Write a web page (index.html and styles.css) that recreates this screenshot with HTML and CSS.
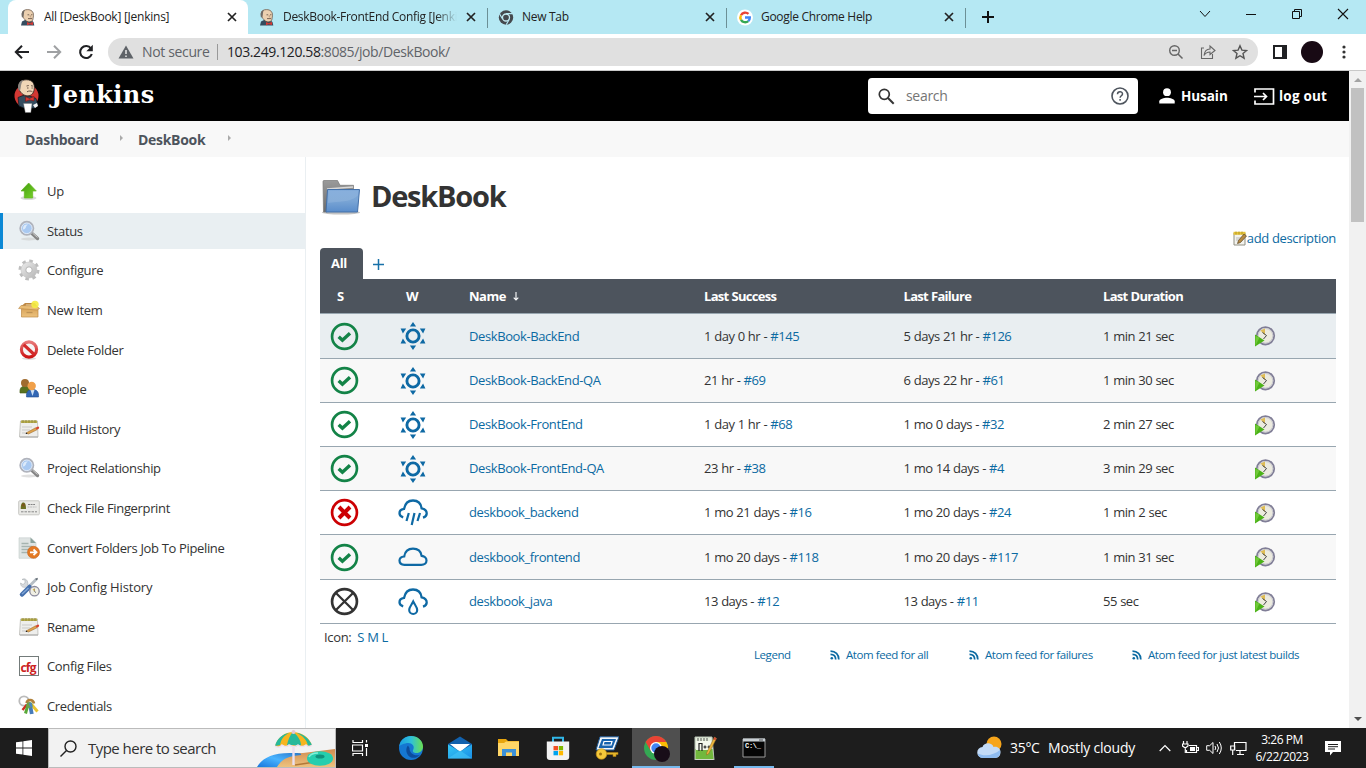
FILE: index.html
```html
<!DOCTYPE html>
<html lang="en">
<head>
<meta charset="utf-8">
<title>All [DeskBook] [Jenkins]</title>
<link rel="stylesheet" href="styles.css">
</head>
<body>
<svg class="defs" width="0" height="0" aria-hidden="true">
  <defs>
    <linearGradient id="gGreen" x1="0" y1="0" x2="1" y2="1"><stop offset="0" stop-color="#3f9a0c"/><stop offset="1" stop-color="#7bd62c"/></linearGradient>
    <linearGradient id="gFolder" x1="0" y1="0" x2="0" y2="1"><stop offset="0" stop-color="#7ba7d9"/><stop offset=".5" stop-color="#7aa5d5"/><stop offset="1" stop-color="#5a8dcb"/></linearGradient>
    <linearGradient id="gGrey" x1="0" y1="0" x2="0" y2="1"><stop offset="0" stop-color="#9a9a9a"/><stop offset="1" stop-color="#6b6b6b"/></linearGradient>
    <linearGradient id="gBox" x1="0" y1="0" x2="0" y2="1"><stop offset="0" stop-color="#d9a45a"/><stop offset="1" stop-color="#ecc27e"/></linearGradient>
    <linearGradient id="gGear" x1="0" y1="0" x2="1" y2="1"><stop offset="0" stop-color="#ececec"/><stop offset="1" stop-color="#b5b5b5"/></linearGradient>
    <linearGradient id="gEdge" x1="0" y1="0" x2="1" y2="0"><stop offset="0" stop-color="#1b9de2"/><stop offset=".5" stop-color="#2fc1d8"/><stop offset="1" stop-color="#6be04f"/></linearGradient>
    <linearGradient id="gMail" x1="0" y1="0" x2="1" y2="1"><stop offset="0" stop-color="#35c8f5"/><stop offset="1" stop-color="#1a8ee6"/></linearGradient>
    <linearGradient id="gRed" x1="0" y1="0" x2="0" y2="1"><stop offset="0" stop-color="#e87878"/><stop offset="1" stop-color="#cc1515"/></linearGradient>
    <linearGradient id="gSand" x1="0" y1="0" x2="0" y2="1"><stop offset="0" stop-color="#d08b4f"/><stop offset="1" stop-color="#edc27e"/></linearGradient>
    <linearGradient id="gSea" x1="0" y1="1" x2="1" y2="0"><stop offset="0" stop-color="#1976dc"/><stop offset=".5" stop-color="#49b4ff"/><stop offset="1" stop-color="#2876c8"/></linearGradient>
  </defs>
  <symbol id="butler" viewBox="0 0 16 17">
    <path d="M1 16.500l1-4 3-1.500h6l2.500 2 .8 3.500z" fill="#344c5f"/>
    <path d="M2.200 5C2 1.800 4.600.6 7.500.6c3.800 0 6.200 2.100 6 6l-.7 4.400c-1 2-4.300 2.500-6.300 1.100L3.300 9z" fill="#ecd0b0" stroke="#5c4c40" stroke-width=".7"/>
    <path d="M2 8.500C.9 4.500 2.200 1.600 5 1 3.600 2.700 4.200 5 3.500 7.500z" fill="#716b66"/>
    <path d="M7.500 5.800h1.700M11 5.800h1.500M8 9.600h4" stroke="#6b594c" stroke-width=".9"/>
    <path d="M10.200 6v2h1.200" fill="none" stroke="#b08f73" stroke-width=".7"/>
    <path d="M7 13l2.700 1.200L13 12.800v3.200l-3.300-.8L7 16.300z" fill="#d33833"/>
  </symbol>
  <symbol id="butler-lg" viewBox="0 0 26 34">
    <ellipse cx="12.500" cy="17" rx="12" ry="11.500" fill="#d33833"/>
    <path d="M4 18.500l5-2 8 1 5 2 2 7-3 2.500-10 .5-6-2.500z" fill="#344c5f" stroke="#11191f" stroke-width=".7"/>
    <path d="M4.500 8C4.300 3.200 8 .8 12.500.8c6 0 8.500 4 7.700 9.500-.5 4-2.700 6.500-6.500 6.500-4.200 0-8.500-3.500-9.200-8.800z" fill="#f0d6b7" stroke="#2c2622" stroke-width=".8"/>
    <path d="M4.700 11.500C2.800 6 5.400 1.500 9.500 1 6.500 4 7.400 8 6 11.500z" fill="#8a8580"/>
    <path d="M12.500 7l2.300-.5M17 6.700l2 .4M13 9h1.500M17.500 9h1.300M13 12.800c2-1.200 4-.9 5.500 0" fill="none" stroke="#5c4a3e" stroke-width=".9"/>
    <path d="M11.500 17.700l4 1.700 4.500-2v4.500l-4.500-1-4 1.500z" fill="#d33833" stroke="#611" stroke-width=".5"/>
    <path d="M9.500 24.500h8.500l-1.200 9h-5.500z" fill="#fff" stroke="#777" stroke-width=".4"/>
    <path d="M19 26l4-2 1 3-3 2z" fill="#f4f4f4"/>
  </symbol>
  <symbol id="close" viewBox="0 0 10 10"><path d="M1 1l8 8M9 1L1 9" fill="none" stroke="currentColor" stroke-width="1.700"/></symbol>
  <symbol id="i-up" viewBox="0 0 22 22"><ellipse cx="10.500" cy="18" rx="8" ry="2" fill="#bbb" opacity=".55"/><path d="M10.700 3l7.600 8h-3.600v7H6.300v-7H3z" fill="url(#gGreen)" stroke="#63b51f" stroke-width=".7"/></symbol>
  <symbol id="i-search" viewBox="0 0 22 22"><ellipse cx="11" cy="19" rx="8" ry="1.500" fill="#ccc" opacity=".6"/><path d="M14 13.500l5.500 5" stroke="#858585" stroke-width="3.400" stroke-linecap="round"/><path d="M14.500 13l5 4.500" stroke="#ccc" stroke-width="1"/><circle cx="8.800" cy="8.300" r="6.500" fill="#b9d2f2" stroke="#b0b3bc" stroke-width="2"/><circle cx="8.800" cy="8.300" r="5.300" fill="#a9c9f1" stroke="#dfe9f6"/><path d="M5 8c0-3 3-4 5-3.500C7 6 9 9 5 9.500z" fill="#dceafa"/></symbol>
  <symbol id="i-gear" viewBox="0 0 22 22"><circle cx="11" cy="11" r="9" fill="none" stroke="#bdbdbd" stroke-width="3" stroke-dasharray="3.500 3.568"/><circle cx="11" cy="11" r="8" fill="url(#gGear)" stroke="#c4c4c4" stroke-width=".6"/><circle cx="11" cy="11" r="3.200" fill="#fff" stroke="#b5b5b5"/></symbol>
  <symbol id="i-box" viewBox="0 0 22 22"><path d="M4 6.500L7 4h10l2 3v3H4z" fill="#bd8744"/><path d="M8 5.500h7v3H7z" fill="#f0d7a8"/><path d="M3.500 9.500h16.500v8.500H3.500z" fill="url(#gBox)" stroke="#bf8a43" stroke-width=".7"/><path d="M3 6.500L.6 9.500 19 11l2.500-1.500L18.500 7z" fill="#e9bc75" stroke="#b98846" stroke-width=".6"/><path d="M8.500 13.500h6" stroke="#bd9255" stroke-width="1.300"/><circle cx="17" cy="5.500" r="3.700" fill="#f5ec42" opacity=".9"/></symbol>
  <symbol id="i-stop" viewBox="0 0 22 22"><ellipse cx="11" cy="19.500" rx="7" ry="1.500" fill="#bbb" opacity=".5"/><circle cx="11" cy="10.500" r="7.600" fill="#f5f5f5" stroke="url(#gRed)" stroke-width="3.100"/><path d="M5.700 5.700l10.500 9.800" stroke="#d32c2c" stroke-width="3.200"/></symbol>
  <symbol id="i-people" viewBox="0 0 22 22"><path d="M2 15c-.5-5 1.500-7 5-7s5 2 5 7z" fill="#58711f" stroke="#455a18" stroke-width=".6"/><circle cx="7" cy="5" r="4" fill="#a06c30"/><path d="M8.500 19c-.5-5 1.500-7.500 6-7.500s6.500 2.500 6 7.500z" fill="#3267b5" stroke="#234f92" stroke-width=".6"/><path d="M12.500 12h4l-2 6z" fill="#cce0f5"/><circle cx="13.700" cy="8" r="4.200" fill="#f0a04a"/></symbol>
  <symbol id="i-note" viewBox="0 0 22 22"><path d="M2.500 3h17l.5 16H1.500z" fill="#eeeeec" stroke="#b9b9b4" stroke-width=".8"/><path d="M3 2.500h16v2.500H3z" fill="#b8af4e"/><path d="M5 2v3M8 2v3M11 2v3M14 2v3M17 2v3" stroke="#8a8238" stroke-width=".8"/><path d="M4 9h10M4 12h8M4 15h5" stroke="#c9c9c9"/><path d="M8 15l9.500-5.200 1.500 2-8.500 4.200z" fill="#dfa24c" stroke="#94672b" stroke-width=".5"/><path d="M17.500 9.800l2.500-1.200c1 .2 1.500 1.200.9 2l-2 1.200z" fill="#d8422c"/><path d="M7.500 16l1-1.500 1 1.400z" fill="#222"/><path d="M2 19h18" stroke="#aaa"/></symbol>
  <symbol id="i-card" viewBox="0 0 22 22"><rect x=".7" y="3.800" width="20.600" height="14" rx="1" fill="#eaeae7" stroke="#c8c8c4"/><path d="M2.700 12c0-5 1-6.500 2.700-6.500S8 7.500 8 12z" fill="#6b7022"/><circle cx="5.400" cy="8" r="1.600" fill="#7c551f"/><path d="M10 7.500h7" stroke="#777" stroke-width=".9" stroke-dasharray="2 .6"/><path d="M9.500 10h9" stroke="#aaa" stroke-width=".7" stroke-dasharray="2 .6"/><path d="M3 14.800h16" stroke="#888" stroke-dasharray="2.500 1"/></symbol>
  <symbol id="i-convert" viewBox="0 0 22 22"><path d="M1 .8h12l5 5v15.500H1z" fill="#dfe4e3" stroke="#c5cdcb" stroke-width=".6"/><path d="M12.500.8l5.500 5.300h-5.500z" fill="#8ca39c"/><path d="M3.500 6.500h7M3.500 9.500h11M3.500 12.500h8M3.500 15.500h6" stroke="#a6b4b0" stroke-width="1.300"/><circle cx="15.500" cy="15.300" r="6" fill="#e47a24" stroke="#c65f15" stroke-width=".6"/><path d="M12 15.300h6M15.500 12.500l3 2.800-3 2.800" fill="none" stroke="#fff" stroke-width="1.800"/></symbol>
  <symbol id="i-tools" viewBox="0 0 22 22"><path d="M4 3.500l3 .5v3L5 8.500 2.500 7c.2 4 3.200 5 5.200 4l6 7 3-2.500-7-6.500C10.700 4.500 7 1.500 4 3.500z" fill="#d6d9dc" stroke="#aaaeb1" stroke-width=".6"/><path d="M18.500 3L11 10.500" stroke="#b7bec4" stroke-width="2.800"/><path d="M17.700 3.500l2-1" stroke="#5d6770" stroke-width="1.500"/><path d="M11.500 11L4 18.500" stroke="#4570ad" stroke-width="4.500" stroke-linecap="round"/><path d="M10.500 12L4 18" stroke="#82a7d8" stroke-width="1.300"/><circle cx="16.500" cy="15.200" r="4.700" fill="#f0efe4" stroke="#8b8a9e" stroke-width="1.300"/><path d="M16.300 12.500v2.800l1.700 1.300" fill="none" stroke="#666" stroke-width=".9"/><path d="M14.500 13l2 0v2.500z" fill="#dbb43e"/></symbol>
  <symbol id="i-cfg" viewBox="0 0 22 22"><rect x="1.500" y="1.500" width="19" height="19" fill="#fff" stroke="#737b7a"/><text x="2.500" y="16.500" class="cfg-text">cfg</text></symbol>
  <symbol id="i-keys" viewBox="0 0 22 22"><circle cx="6" cy="6" r="4.700" fill="none" stroke="#bbb" stroke-width="1.800"/><path d="M9 9.500L4.500 15" stroke="#cc2d20" stroke-width="2.500"/><path d="M10 9.500L7.500 18.500" stroke="#5aa838" stroke-width="3"/><path d="M13.500 9.500l6 7" stroke="#e9c430" stroke-width="3"/><path d="M12 9.500l1.800 9.500" stroke="#467bb9" stroke-width="3.800"/><path d="M8.500 8c1-4 6.500-4 7.500.5" fill="none" stroke="#b0813a" stroke-width="2.600"/><circle cx="11.500" cy="10" r="3" fill="#6ba04c"/><path d="M12 8l1.500 4" stroke="#4e87c2" stroke-width="2.500"/></symbol>
  <symbol id="s-ok" viewBox="0 0 28 28"><circle cx="14" cy="14" r="12" fill="none" stroke="#138347" stroke-width="2.600"/><path d="M8.400 14.200l3.600 3.400 7.300-6.800" fill="none" stroke="#138347" stroke-width="3.300"/></symbol>
  <symbol id="s-bad" viewBox="0 0 28 28"><circle cx="14" cy="14" r="12" fill="none" stroke="#cc0003" stroke-width="2.600"/><path d="M8.700 8.700l10.600 10.600M19.300 8.700L8.700 19.300" stroke="#cc0003" stroke-width="3.800"/></symbol>
  <symbol id="s-off" viewBox="0 0 28 28"><circle cx="14" cy="14" r="12" fill="none" stroke="#333" stroke-width="2.600"/><path d="M5.500 5.500l17 17M22.500 5.500l-17 17" stroke="#333" stroke-width="2.200"/></symbol>
  <symbol id="w-sun" viewBox="0 0 30 30"><circle cx="15" cy="15" r="6.100" fill="none" stroke="#0e69a4" stroke-width="2.900"/><path d="M15 1l3.100 4.500h-6.200zM15 29l3.100-4.500h-6.200zM2.600 7.400h5.600l-3.300 5.100zM27.400 7.400h-5.600l3.300 5.100zM2.600 22.600h5.600l-3.300-5.100zM27.400 22.600h-5.600l3.300-5.100z" fill="#0e69a4"/></symbol>
  <symbol id="w-cloud" viewBox="0 0 30 30"><path d="M6.500 22.800c-3 0-5-1.500-5-4.200 0-2.500 2-3.800 4.700-4.100C7 9.500 10.200 6.700 15 6.700s7.900 2.700 8.600 7.100c2.700.3 4.900 2.300 4.900 4.600 0 2.700-2.200 4.400-5.200 4.400z" fill="none" stroke="#0e69a4" stroke-width="2.200"/></symbol>
  <symbol id="w-top" viewBox="0 0 30 30"><path d="M5.200 19.300C3 18.600 1.500 17.200 1.500 15.200c0-2.500 1.800-3.900 4.500-4.300C7 6 10.200 2.500 15 2.500s7.900 2.800 8.600 7.800c3 .6 5.100 2.600 5.100 5.200 0 2.200-1.500 3.500-3.700 4.200" fill="none" stroke="#0e69a4" stroke-width="2.300"/></symbol>
  <symbol id="w-rain" viewBox="0 0 30 30"><use href="#w-top"/><path d="M10.800 15l-2.300 8M16.500 15l-2.800 12M22 15l-2.500 8" stroke="#0e69a4" stroke-width="2.200"/></symbol>
  <symbol id="w-drop" viewBox="0 0 30 30"><use href="#w-top"/><path d="M15.200 14.500c-1.700 3.500-4 5.500-4 8.500a4 4 0 0 0 8 0c0-3-2.300-5-4-8.500z" fill="none" stroke="#0e69a4" stroke-width="2.100"/></symbol>
  <symbol id="build" viewBox="0 0 22 22"><circle cx="11.500" cy="10.800" r="8.700" fill="#ecebdf" stroke="#807e97" stroke-width="1.800"/><circle cx="11.500" cy="10.800" r="7.300" fill="none" stroke="#c8c8d0"/><path d="M11 10L6.500 5.500 11 3.500z" fill="#dfbd55"/><path d="M8.500 7.500l4 3-3 3.500" fill="none" stroke="#444" stroke-width="1"/><path d="M1 9.500l9.500 6L1 21.500z" fill="#4bb218"/><path d="M1.500 11l4 1.500-4 8z" fill="#71c939"/></symbol>
  <symbol id="rss" viewBox="0 0 10 10"><circle cx="1.800" cy="8.200" r="1.300" fill="#0b6aa2"/><path d="M.5 4.300c3.200 0 5.200 2 5.200 5.200M.5 1.200C5.500 1.200 8.800 4.500 8.800 9.500" fill="none" stroke="#0b6aa2" stroke-width="1.700"/></symbol>
</svg>

<header class="tabs">
  <div class="tab tab-active"><svg class="fav"><use href="#butler"/></svg><span class="tab-title">All [DeskBook] [Jenkins]</span><svg class="tab-x"><use href="#close"/></svg></div>
  <div class="tab"><svg class="fav"><use href="#butler"/></svg><span class="tab-title tab-fade">DeskBook-FrontEnd Config [Jenkins]</span><svg class="tab-x"><use href="#close"/></svg></div>
  <div class="tab tab-line"><svg class="fav" viewBox="0 0 16 16"><circle cx="8" cy="8" r="7.200" fill="#45494e"/><circle cx="8" cy="8" r="3.500" fill="#45494e" stroke="#c7ebf2" stroke-width="1.300"/><path d="M8 4.200h6.500M4.700 9.800L1.600 4.500M11.300 9.800L8.200 15.200" stroke="#b5e8f3" stroke-width="1.200"/></svg><span class="tab-title">New Tab</span><svg class="tab-x"><use href="#close"/></svg></div>
  <div class="tab tab-line"><svg class="fav" viewBox="0 0 16 16"><circle cx="8" cy="8" r="8" fill="#fff"/><g fill="none" stroke-width="2.400"><path d="M4 5.700a4.800 4.800 0 0 1 7.500-1.300" stroke="#ea4335"/><path d="M4 5.700a4.800 4.800 0 0 0 0 4.600" stroke="#fbbc05"/><path d="M4 10.300a4.800 4.800 0 0 0 7.300 1.300" stroke="#34a853"/><path d="M8 8h4.800a4.800 4.800 0 0 1-1.500 3.600" stroke="#4285f4"/></g></svg><span class="tab-title">Google Chrome Help</span><svg class="tab-x"><use href="#close"/></svg></div>
  <div class="newtab"><svg width="12" height="12" viewBox="0 0 12 12"><path d="M6 0v12M0 6h12" stroke="#111" stroke-width="2"/></svg></div>
  <div class="win">
    <svg viewBox="0 0 46 28"><path d="M18 11l5 5.500 5-5.500" fill="none" stroke="#111"/></svg>
    <svg viewBox="0 0 46 28"><path d="M18 14.500h10" stroke="#111"/></svg>
    <svg viewBox="0 0 46 28"><path d="M18.500 11.500h7v7h-7zM20.500 11.500v-2h7v7h-2" fill="none" stroke="#111"/></svg>
    <svg viewBox="0 0 46 28"><path d="M18 9l10 10M28 9L18 19" stroke="#111" stroke-width="1.100"/></svg>
  </div>
</header>

<div class="toolbar">
  <svg class="nav" viewBox="0 0 16 16"><path d="M15 8H2M8 1.800L1.800 8 8 14.200" fill="none" stroke="#202124" stroke-width="2"/></svg>
  <svg class="nav" viewBox="0 0 16 16"><path d="M1 8h13M8 1.800L14.200 8 8 14.200" fill="none" stroke="#9fa1a3" stroke-width="2"/></svg>
  <svg class="nav" viewBox="0 0 16 16"><path d="M13 4.500A6 6 0 1 0 13.800 10" fill="none" stroke="#202124" stroke-width="2.100"/><path d="M14.800.8v6.500H8.300z" fill="#202124"/></svg>
  <div class="omni">
    <svg width="16" height="14" viewBox="0 0 16 14"><path d="M8 .5L15.500 13.500H.5z" fill="#5f6368"/><path d="M8 5v4M8 10.500V12" stroke="#e0e0e0" stroke-width="1.600"/></svg>
    <span class="insecure">Not secure</span><i class="omni-sep"></i>
    <span class="url"><span class="host">103.249.120.58</span>:8085/job/DeskBook/</span>
    <span class="omni-icons">
      <svg viewBox="0 0 16 16"><circle cx="6.500" cy="6.500" r="4.800" fill="none" stroke="#666" stroke-width="1.400"/><path d="M4 6.500h5M10 10l4.500 4.500" stroke="#666" stroke-width="1.500"/></svg>
      <svg viewBox="0 0 16 16"><path d="M4 4H1.500v10.500h11V10M4 11.500C4.500 7 7 5 10 5V2l5 4.500-5 4V8C7.500 8 5.500 9 4 11.500z" fill="none" stroke="#666" stroke-width="1.100"/></svg>
      <svg viewBox="0 0 16 16"><path d="M8 1.800l1.900 4.300 4.700.4-3.600 3 1.100 4.700L8 11.700l-4.100 2.500L5 9.500l-3.600-3 4.700-.4z" fill="none" stroke="#555" stroke-width="1.400"/></svg>
    </span>
  </div>
  <svg class="side" viewBox="0 0 14 14"><path d="M1 1h12v12H1z" fill="none" stroke="#202124" stroke-width="2"/><path d="M9 1h4v12H9z" fill="#202124"/></svg>
  <span class="avatar"></span>
  <svg class="kebab" viewBox="0 0 4 14"><g fill="#333"><circle cx="2" cy="2" r="1.600"/><circle cx="2" cy="7" r="1.600"/><circle cx="2" cy="12" r="1.600"/></g></svg>
</div>

<div class="view">
  <div class="page">
    <div class="jhead">
      <svg class="jlogo"><use href="#butler-lg"/></svg><span class="jname">Jenkins</span>
      <div class="jsearch"><svg width="17" height="17" viewBox="0 0 17 17"><circle cx="6.300" cy="6.300" r="5" fill="none" stroke="#333" stroke-width="1.700"/><path d="M10 10l5.700 5.700" stroke="#333" stroke-width="2"/></svg><span>search</span><svg class="help" width="18" height="18" viewBox="0 0 18 18"><circle cx="9" cy="9" r="8" fill="none" stroke="#4d545d" stroke-width="1.600"/><path d="M6.500 7.200c0-3.300 5-3.300 5-.3 0 1.700-2.400 2-2.400 3.900M9.100 12v1.700" fill="none" stroke="#4d545d" stroke-width="1.500"/></svg></div>
      <svg class="user" width="16" height="16" viewBox="0 0 16 16"><circle cx="8" cy="4.200" r="3.900" fill="#fff"/><path d="M.3 15.500v-2.300C.3 11 5 9.700 8 9.700s7.700 1.300 7.700 3.500v2.300z" fill="#fff"/></svg><span class="jlink husain">Husain</span>
      <svg class="logout" width="21" height="17" viewBox="0 0 21 17"><path d="M1 4.500V1h18.500v15H1v-3.500M0 8.500h12M9 5l3.500 3.500L9 12" fill="none" stroke="#fff" stroke-width="1.700"/></svg><span class="jlink">log out</span>
    </div>
    <nav class="crumbs"><span class="c1">Dashboard</span><i class="arrow"></i><span class="c2">DeskBook</span><i class="arrow"></i></nav>
    <div class="cols">
      <aside class="sidebar">
        <a class="item"><svg><use href="#i-up"/></svg><span>Up</span></a>
        <a class="item item-on"><svg><use href="#i-search"/></svg><span>Status</span></a>
        <a class="item"><svg><use href="#i-gear"/></svg><span>Configure</span></a>
        <a class="item"><svg><use href="#i-box"/></svg><span>New Item</span></a>
        <a class="item"><svg><use href="#i-stop"/></svg><span>Delete Folder</span></a>
        <a class="item"><svg><use href="#i-people"/></svg><span>People</span></a>
        <a class="item"><svg><use href="#i-note"/></svg><span>Build History</span></a>
        <a class="item"><svg><use href="#i-search"/></svg><span>Project Relationship</span></a>
        <a class="item"><svg><use href="#i-card"/></svg><span>Check File Fingerprint</span></a>
        <a class="item"><svg><use href="#i-convert"/></svg><span>Convert Folders Job To Pipeline</span></a>
        <a class="item"><svg><use href="#i-tools"/></svg><span class="jch">Job Config History</span></a>
        <a class="item"><svg><use href="#i-note"/></svg><span>Rename</span></a>
        <a class="item"><svg><use href="#i-cfg"/></svg><span>Config Files</span></a>
        <a class="item"><svg><use href="#i-keys"/></svg><span>Credentials</span></a>
      </aside>
      <main class="main">
        <h1 class="title"><svg width="42" height="38" viewBox="0 0 42 38"><ellipse cx="21" cy="34.500" rx="19" ry="2" fill="#aaa" opacity=".7"/><path d="M3 3.500Q3 2.500 4 2.500h13.500L20 7.300h13.500v5L7 34H3.500z" fill="url(#gGrey)" stroke="#777" stroke-width=".7"/><path d="M7 11L33 9" stroke="#d8d8d8" stroke-width="1.500"/><path d="M7.500 11.500h32L37.500 34H6z" fill="url(#gFolder)" stroke="#4470a8"/><path d="M8.500 12.500h30l-.5 5C30 25 18 23 8 25z" fill="#a5c4e6" opacity=".3"/></svg><span>DeskBook</span></h1>
        <div class="desc"><svg width="14" height="15" viewBox="0 0 14 15"><path d="M1 2h11v12H1z" fill="#f3f3ee" stroke="#908f83"/><path d="M.5.800h12v3H.5z" fill="#e5c33b"/><path d="M3 .5v3M6 .5v3M9 .5v3" stroke="#a1861e" stroke-width=".7"/><path d="M3 7h5M3 9h3" stroke="#bbb"/><path d="M4.500 12.500l1-3L11 3l2.500 2-6 6.500z" fill="#b78a41" stroke="#5a4523" stroke-width=".7"/></svg><span>add description</span></div>
        <div class="viewtabs"><span class="all">All</span><svg class="plus" width="11" height="11" viewBox="0 0 11 11"><path d="M5.500 0v11M0 5.500h11" stroke="#1871a9" stroke-width="1.500"/></svg></div>
        <div class="row head"><span class="hs">S</span><span class="hw">W</span><span class="name-h">Name<svg class="sort" width="6" height="9" viewBox="0 0 6 9"><path d="M3 0v8M.7 5.700L3 8l2.300-2.300" fill="none" stroke="#fff" stroke-width="1.100"/></svg></span><span>Last Success</span><span>Last Failure</span><span>Last Duration</span></div>
        <div class="row tall hover"><svg class="st"><use href="#s-ok"/></svg><svg class="we"><use href="#w-sun"/></svg><a class="job">DeskBook-BackEnd</a><span>1 day 0 hr - <a>#145</a></span><span>5 days 21 hr - <a>#126</a></span><span>1 min 21 sec</span><svg class="go"><use href="#build"/></svg></div>
        <div class="row alt"><svg class="st"><use href="#s-ok"/></svg><svg class="we"><use href="#w-sun"/></svg><a class="job">DeskBook-BackEnd-QA</a><span>21 hr - <a>#69</a></span><span>6 days 22 hr - <a>#61</a></span><span>1 min 30 sec</span><svg class="go"><use href="#build"/></svg></div>
        <div class="row"><svg class="st"><use href="#s-ok"/></svg><svg class="we"><use href="#w-sun"/></svg><a class="job">DeskBook-FrontEnd</a><span>1 day 1 hr - <a>#68</a></span><span>1 mo 0 days - <a>#32</a></span><span>2 min 27 sec</span><svg class="go"><use href="#build"/></svg></div>
        <div class="row alt"><svg class="st"><use href="#s-ok"/></svg><svg class="we"><use href="#w-sun"/></svg><a class="job">DeskBook-FrontEnd-QA</a><span>23 hr - <a>#38</a></span><span>1 mo 14 days - <a>#4</a></span><span>3 min 29 sec</span><svg class="go"><use href="#build"/></svg></div>
        <div class="row"><svg class="st"><use href="#s-bad"/></svg><svg class="we"><use href="#w-rain"/></svg><a class="job">deskbook_backend</a><span>1 mo 21 days - <a>#16</a></span><span>1 mo 20 days - <a>#24</a></span><span>1 min 2 sec</span><svg class="go"><use href="#build"/></svg></div>
        <div class="row tall alt"><svg class="st"><use href="#s-ok"/></svg><svg class="we"><use href="#w-cloud"/></svg><a class="job">deskbook_frontend</a><span>1 mo 20 days - <a>#118</a></span><span>1 mo 20 days - <a>#117</a></span><span>1 min 31 sec</span><svg class="go"><use href="#build"/></svg></div>
        <div class="row"><svg class="st"><use href="#s-off"/></svg><svg class="we"><use href="#w-drop"/></svg><a class="job">deskbook_java</a><span>13 days - <a>#12</a></span><span>13 days - <a>#11</a></span><span>55 sec</span><svg class="go"><use href="#build"/></svg></div>
        <div class="iconsize">Icon: <a class="sml">S M L</a></div>
        <div class="feeds"><a class="legend">Legend</a><svg><use href="#rss"/></svg><a class="f1">Atom feed for all</a><svg><use href="#rss"/></svg><a class="f2">Atom feed for failures</a><svg><use href="#rss"/></svg><a class="f3">Atom feed for just latest builds</a></div>
      </main>
    </div>
  </div>
  <div class="scroll"><i class="s-up"></i><i class="thumb"></i><i class="s-down"></i></div>
</div>

<footer class="taskbar">
  <div class="start"><svg width="16" height="16" viewBox="0 0 16 16"><path d="M0 2.300L6.500 1.400v6.200H0zM7.300 1.300L16 0v7.600H7.300zM0 8.400h6.500v6.200L0 13.700zM7.300 8.400H16V16l-8.700-1.300z" fill="#fff"/></svg></div>
  <div class="tsearch"><svg width="17" height="17" viewBox="0 0 17 17"><circle cx="10.500" cy="6.500" r="5.500" fill="none" stroke="#222" stroke-width="1.400"/><path d="M6.500 10.500L.5 16.500" stroke="#222" stroke-width="1.400"/></svg><span>Type here to search</span>
    <svg class="beach" width="78" height="38" viewBox="0 0 78 38"><path d="M16 38c3-9 14-14 30-14l32-4v18z" fill="url(#gSand)"/><path d="M0 38c5-9 16-15 37-14 4 0 8 0 7 2-13 1-19 4-24 12z" fill="url(#gSea)"/><path d="M38 36l20-3" stroke="#b27838" stroke-width="1.500"/><path d="M36.500 4v32" stroke="#eadff0" stroke-width="2.400"/><path d="M18 17C21 8 28 3 36 3s16 5 19 13q-4 3-6 0-4 3-7 0-5 3-9 0-4 3-7 0-4 3-8 1z" fill="#f6b51f"/><path d="M32 4c-6 3-8 7-9 12l-5 1C20 9 26 5 32 4zM36 3c-3 3-5 8-6 13h6.500q5 2 7.500 0c0-5-4-10-8-13zM40 4c7 1 12 6 15 12l-4 1C50 11 46 7 40 4z" fill="#27b99b"/><path d="M18 17q4 3 7-1 4 3 7 0 5 3 9 0 4 3 8 0 3 3 6 0" fill="none" stroke="#eee0ef" stroke-width="1.500"/><circle cx="36.500" cy="3" r="2" fill="#e7c5d1"/><ellipse cx="63" cy="29.500" rx="13" ry="7.300" fill="#25ceae"/><ellipse cx="63" cy="27.500" rx="4.500" ry="2" fill="#11917d"/><path d="M52 28q2-4 9-4" fill="none" stroke="#83f0d9" stroke-width="1.500"/></svg></div>
  <div class="app taskview"><svg width="16" height="16" viewBox="0 0 16 16"><path d="M1 0v2.500h9.500V0M.5 5h10v6H.5zM1 16v-2.500h9.500V16M14.500 0v2.500M14.500 8v8" fill="none" stroke="#fff" stroke-width="1.200"/><path d="M13 4h3v3h-3z" fill="#fff"/></svg></div>
  <div class="apps">
    <div class="app"><svg viewBox="0 0 24 24"><circle cx="12" cy="12" r="12" fill="#1577d2"/><path d="M.2 10C1.500 3.800 6.200 0 12 0c7 0 12 5 12 10.500 0 4-3 6.500-6.500 6.500-3 0-4.500-1.500-3.200-3.500C16 10 13 7 9.500 7 5 7 1.500 9.500.2 10z" fill="url(#gEdge)"/><path d="M9 9.500c-3 3-2 10 3 12 3.500 1 7-.5 9-2.800C16 21 10 17 10.500 12z" fill="#0c4c9c"/></svg></div>
    <div class="app"><svg viewBox="0 0 24 24"><path d="M0 8l12-7.500L24 8v6H0z" fill="#1261ad"/><path d="M2 8h20l-10 8z" fill="#fff"/><path d="M0 8.500l12 7 12-7v14H0z" fill="url(#gMail)"/><path d="M0 22.500l12-8 12 8z" fill="#45c7f6" opacity=".6"/></svg></div>
    <div class="app"><svg viewBox="0 0 24 24"><path d="M1 3h8l2 2h11v4H1z" fill="#e8a50d"/><path d="M1 7h6l2-1.500h13V20H1z" fill="#ffd667"/><path d="M5 20v-7h14v7h-4v-3.500H9V20z" fill="#3c91d8"/></svg></div>
    <div class="app"><svg viewBox="0 0 24 24"><path d="M7 7V1.700h10V7" fill="none" stroke="#31b7e8" stroke-width="2"/><path d="M.8 5.500h22.400V21q0 3-3 3h-16.400q-3 0-3-3z" fill="#f3f3f3"/><path d="M7.500 10H12v4.300H7.500z" fill="#f25022"/><path d="M12.800 10h4.300v4.300h-4.300z" fill="#7fba00"/><path d="M7.500 15H12v4.300H7.500z" fill="#00a4ef"/><path d="M12.800 15h4.300v4.300h-4.300z" fill="#ffb900"/></svg></div>
    <div class="app"><svg viewBox="0 0 24 24"><path d="M5 .8h19L19 14H1z" fill="#f4f8fb" stroke="#1e5994"/><path d="M7 3h14l-3.500 9H3.500z" fill="#1763ae"/><path d="M9 5.500h8l-1 3.500H8z" fill="none" stroke="#fff" stroke-width="1.200"/><path d="M10 16.500h13v2h-2v2h-3v-2h-8z" fill="#e3b52b" stroke="#ad7e13" stroke-width=".6"/><circle cx="6.500" cy="18" r="5.300" fill="#f4c83a" stroke="#bd8b19" stroke-width=".7"/><circle cx="5.500" cy="18" r="1.500" fill="#9c7113"/></svg></div>
    <div class="app app-on"><svg viewBox="0 0 26 26"><circle cx="12" cy="12" r="12" fill="#34a853"/><path d="M22.400 6A12 12 0 0 1 12 24l5-9-5-9z" fill="#fbbc05"/><path d="M1.600 6l5.200 9L12 6h10.400A12 12 0 0 0 1.600 6z" fill="#ea4335"/><circle cx="12" cy="12" r="6" fill="#fff"/><circle cx="12" cy="12" r="4.700" fill="#4285f4"/><circle cx="18" cy="18" r="8" fill="#180d18"/></svg></div>
    <div class="app"><svg viewBox="0 0 24 24"><path d="M2 1h17l2 23H2z" fill="#e5efdc" stroke="#b9c3b5"/><path d="M2.500 13h17l1 10h-18z" fill="#72b83d"/><path d="M3 5h15v9H3z" fill="#f4f8ed"/><path d="M5 2v3M8 2v3M11 2v3M14 2v3" stroke="#555"/><path d="M6 15V7.500h3V15M10.500 11h3M12 9.500v3M14.500 11h3M16 9.500v3" fill="none" stroke="#222" stroke-width="1.200"/><path d="M21.500 1l2 1.500L15.500 18l-2 1 .3-2.500z" fill="#edb73d" stroke="#8c631c" stroke-width=".5"/><path d="M21.500 1l2 1.500-1 2-2-1.300z" fill="#ce4a36"/></svg></div>
    <div class="app app-run"><svg viewBox="0 0 24 24"><path d="M1 3h22v18H1z" fill="#050505" stroke="#9a9a9a"/><path d="M1 2.500h22v3H1z" fill="#c9d0d5"/><path d="M17 4h4" stroke="#555"/><text x="3" y="12" class="cmd-text">C:\_</text></svg></div>
  </div>
  <div class="tray">
    <svg class="weather" width="26" height="24" viewBox="0 0 26 24"><circle cx="17" cy="8" r="7.500" fill="#f6a51b"/><path d="M6 22a5.500 5.500 0 0 1-.5-11C7 6 15 6 16.500 11c4-1 7 1.500 7 5.300C23.500 20 21 22 18 22z" fill="#c3dbf7"/><path d="M6 22c-3 0-5-2-5.300-4.500C8 21 17 19 23 14c1 5-2 8-5 8z" fill="#8fbcf0"/></svg>
    <span class="temp">35°C</span><span class="cloudy">Mostly cloudy</span>
    <svg class="chev" width="12" height="8" viewBox="0 0 12 8"><path d="M.7 7L6 1.500 11.300 7" fill="none" stroke="#fff" stroke-width="1.200"/></svg>
    <svg class="batt" width="17" height="14" viewBox="0 0 17 14"><path d="M7 4.500h7.500v7H4.500V9M15 6.500h1.500v3H15" fill="none" stroke="#fff" stroke-width="1.200"/><path d="M8 6h5v4H8z" fill="#fff"/><path d="M1.500 0v2.500M5 0v2.500M.5 3h5.500v2L3.300 7 .5 5zM3.300 7v5" fill="none" stroke="#fff" stroke-width="1.200"/></svg>
    <svg class="vol" width="17" height="14" viewBox="0 0 17 14"><path d="M.7 4.700h3L7 1.500v11L3.700 9.300h-3z" fill="none" stroke="#fff"/><path d="M9 5q1.500 2 0 4M11 3q3 4 0 8M13.300 1q4 6 0 12" fill="none" stroke="#fff"/></svg>
    <svg class="net" width="17" height="15" viewBox="0 0 17 15"><path d="M4.500 9.500V1.500h11.500v8H6M10 10v3M7 13.500h7M.7 5h4v4h-4zM2.700 9v5" fill="none" stroke="#fff" stroke-width="1.200"/></svg>
    <div class="clock"><span>3:26 PM</span><span>6/22/2023</span></div>
    <svg class="notif" width="16" height="16" viewBox="0 0 16 16"><path d="M0 1h16v11H8l-3 3.500V12H0z" fill="#fff"/><path d="M3 4.500h10M3 6.700h10M3 9h7" stroke="#1d1d1d"/></svg>
  </div>
</footer>
</body>
</html>
```

FILE: styles.css
```css
* { box-sizing: border-box; }
html, body { margin: 0; height: 768px; overflow: hidden; }
body { display: flex; flex-direction: column; width: 1366px; background: #fff; color: #333; font: 13px/18px "Open Sans", "Noto Sans", sans-serif; letter-spacing: -.3px; white-space: nowrap; }
svg { display: block; flex: none; }
i { display: block; flex: none; }
.defs { position: absolute; }

.tabs { display: flex; flex: none; height: 34px; padding-left: 8px; background: #b5e8f3; }
.tab { display: flex; align-items: center; width: 239px; padding: 0 11px 0 11px; }
.tab-active { width: 240px; padding-left: 12px; background: #fff; border-radius: 8px 8px 0 0; }
.tab-line { background: linear-gradient(#6c9096, #6c9096) 0 8px / 1px 20px no-repeat; }
.fav { width: 16px; height: 17px; }
.tab-title { flex: 1; min-width: 0; margin-left: 8px; overflow: hidden; color: #222; font-size: 12px; }
.tab-active .tab-title { letter-spacing: -.25px; }
.tab-fade { margin-right: 9px; mask-image: linear-gradient(90deg, #000 88%, transparent); }
.tab-x { width: 10px; height: 10px; color: #222; }
.newtab { display: flex; align-items: center; width: 40px; padding-left: 17px; background: linear-gradient(#6c9096, #6c9096) 0 8px / 1px 20px no-repeat; }
.win { display: flex; margin-left: auto; }
.win svg { width: 46px; height: 28px; }

.toolbar { display: flex; flex: none; align-items: center; height: 37px; padding: 0 20px 1px 14px; border-bottom: 1px solid #c9c9c9; }
.nav { width: 16px; height: 16px; margin-right: 16px; }
.omni { display: flex; align-items: center; width: 1150px; height: 28px; margin-left: -2px; padding: 0 10px 0 10px; border-radius: 14px; background: #e0e0e0; color: #5f6368; font-size: 14px; }
.insecure { width: 67px; margin-left: 8px; letter-spacing: -.35px; }
.omni-sep { width: 1px; height: 16px; margin: 0 9px 0 8px; background: #999; }
.url { letter-spacing: -.4px; }
.host { color: #202124; }
.omni-icons { display: flex; gap: 16px; margin-left: auto; }
.omni-icons svg { width: 16px; height: 16px; }
.side { width: 14px; height: 14px; margin-left: 15px; }
.avatar { width: 22px; height: 22px; margin-left: 14px; border-radius: 50%; background: #180a14; }
.kebab { width: 4px; height: 14px; margin-left: 19px; }

.view { display: flex; flex: none; height: 657px; }
.page { display: flex; flex-direction: column; width: 1349px; }
.jhead { display: flex; flex: none; align-items: center; height: 50px; padding: 0 0 0 14px; background: #000; }
.jlogo { width: 26px; height: 34px; }
.jname { width: 105px; margin: -3px 0 0 11px; color: #fff; font: bold 24px/30px "DejaVu Serif", serif; letter-spacing: .4px; }
.jsearch { display: flex; align-items: center; width: 270px; height: 36px; margin-left: 712px; padding: 0 9px 0 10px; border-radius: 4px; background: #fff; color: #757575; font-size: 14px; }
.jsearch span { margin-left: 11px; }
.help { margin-left: auto; }
.user { margin-left: 21px; }
.jlink { margin-left: 7px; color: #fff; font-size: 13.500px; font-weight: 700; letter-spacing: .2px; }
.husain { width: 46px; margin-left: 6px; letter-spacing: -.05px; }
.logout { margin-left: 27px; }
.logout + .jlink { margin-left: 4px; }
.crumbs { display: flex; flex: none; align-items: center; height: 36px; padding: 2px 0 0 25px; background: #f8f8f8; color: #4d545d; font-size: 14px; font-weight: 700; }
.c1 { width: 73px; }
.c2 { width: 68px; margin-left: 15px; }
.arrow { margin: -4px 0 0 22px; border: solid transparent; border-width: 3px 0 3px 3px; border-left-color: #aaa; }

.cols { display: flex; flex: 1; min-height: 0; }
.sidebar { display: flex; flex-direction: column; gap: 3.600px; width: 306px; padding-top: 16.200px; border-right: 1px solid #eaeff2; overflow: hidden; }
.item { display: flex; flex: none; align-items: center; height: 36px; padding-left: 18px; gap: 7px; color: #333; font-weight: 500; letter-spacing: -.35px; }
.item svg { width: 22px; height: 22px; }
.item-on { padding-left: 15px; border-left: 3px solid #0b88d5; background: #e9eff2; }
.jch { letter-spacing: -.15px; }
.cfg-text { font: bold 12px "Open Sans", sans-serif; letter-spacing: -.8px; fill: #c22; }
.cmd-text { font: bold 7px "Liberation Mono", monospace; fill: #fff; }

.main { display: flex; flex-direction: column; width: 1030px; padding: 22px 0 0 14px; }
.title { display: flex; flex: none; height: 36px; margin: 0; gap: 9px; font-size: 29px; line-height: 33px; letter-spacing: -1.250px; }
.title svg { margin-top: -1px; }
.desc { display: flex; flex: none; justify-content: flex-end; height: 18px; margin: 14px 0 1px; color: #0b6aa2; font-weight: 500; letter-spacing: -.35px; }
.desc svg { margin-top: 2px; }
.viewtabs { display: flex; flex: none; height: 31px; }
.all { width: 43px; padding: 6px 0 0 11px; border-radius: 4px 4px 0 0; background: #4d545d; color: #fff; font-weight: 700; }
.plus { margin: 11px 0 0 10px; }
.row { display: grid; flex: none; grid-template-columns: 69px 80px 235px 199.500px 199.500px 151px 82px; align-items: center; height: 44px; border-bottom: 1px solid #98a6b0; letter-spacing: -.47px; }
.row > span, .row > a { margin-top: -1px; }
.row > span { word-spacing: .3px; }
.row a, .iconsize a, .feeds a { color: #0b6aa2; font-weight: 500; }
.row a.job { letter-spacing: -.4px; }
.tall { height: 45px; }
.hover { background: #e9eef1; }
.alt { background: #f8f8f8; }
.head { height: 35px; background: #4d545d; color: #fff; font-weight: 700; letter-spacing: -.7px; }
.row.head > span { margin-top: 0; }
.hs { padding-left: 17px; }
.hw { padding-left: 17px; }
.name-h { display: flex; align-items: center; }
.name-h { letter-spacing: -.5px; }
.sort { margin-left: 7px; }
.st { width: 29px; height: 29px; margin-left: 10px; }
.we { width: 30px; height: 30px; margin-left: 9px; }
.go { width: 22px; height: 22px; }
.iconsize { margin: 4px 0 0 4px; letter-spacing: -.35px; }
.sml { margin-left: 3px; }
.feeds { display: flex; align-items: center; margin-left: 434px; font-size: 11.500px; letter-spacing: -.42px; }
.feeds svg { width: 10px; height: 10px; margin-right: 6px; }
.legend { width: 76px; }
.f1 { width: 123px; }
.f2 { width: 147px; }

.scroll { display: flex; flex-direction: column; align-items: center; width: 17px; padding: 7px 0 7px; background: #f1f1f1; }
.s-up { border: solid transparent; border-width: 0 4px 4px; border-bottom-color: #a3a3a3; }
.thumb { width: 13px; height: 134px; margin-top: 6px; background: #c1c1c1; }
.s-down { margin-top: auto; border: solid transparent; border-width: 4px 4px 0; border-top-color: #505050; }

.taskbar { display: flex; flex: none; height: 40px; background: #1d1d1d; }
.start { display: flex; align-items: center; justify-content: center; width: 48px; }
.tsearch { display: flex; align-items: center; width: 288px; padding-left: 11px; border: 1px solid #bbb; background: #f2f2f2; color: #333; font-size: 15px; letter-spacing: -.53px; }
.tsearch span { margin-left: 11px; }
.beach { margin-left: auto; }
.apps { display: flex; gap: 1px; margin-left: 3px; }
.app { display: flex; align-items: center; justify-content: center; width: 48px; }
.apps svg { width: 24px; height: 24px; }
.app-on { background: #4f4f4f; border-bottom: 2px solid #76b9ed; }
.apps .app-on svg { width: 26px; height: 26px; margin: 3px 0 0 2px; }
.app-run { background: linear-gradient(#76b9ed, #76b9ed) 4px 38px / 40px 2px no-repeat; }
.tray { display: flex; align-items: center; margin-left: auto; padding-right: 25px; color: #fff; font-size: 14px; }
.temp { width: 38px; margin-left: 7px; }
.cloudy { width: 88px; letter-spacing: -.2px; }
.chev { margin-left: 23px; }
.batt { margin-left: 11px; }
.vol { margin-left: 7px; }
.net { margin-left: 7px; }
.clock { display: flex; flex-direction: column; align-items: center; width: 56px; margin-left: 7px; font-size: 12px; line-height: 17px; letter-spacing: -.45px; }
.notif { margin-left: 15px; }
```
